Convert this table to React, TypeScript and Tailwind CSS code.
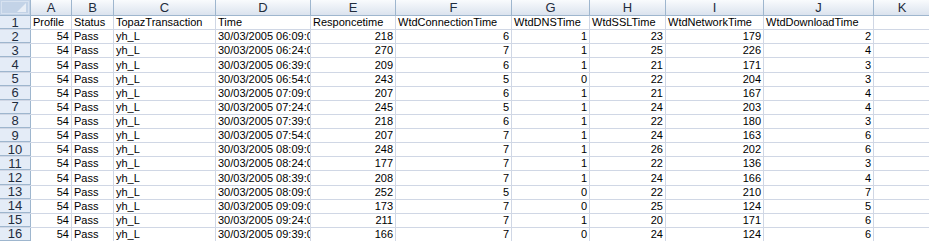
import React from "react";

const cols = [
  { key: "A", w: "w-[41px]" },
  { key: "B", w: "w-[42px]" },
  { key: "C", w: "w-[102px]" },
  { key: "D", w: "w-[95px]" },
  { key: "E", w: "w-[85px]" },
  { key: "F", w: "w-[116px]" },
  { key: "G", w: "w-[78px]" },
  { key: "H", w: "w-[76px]" },
  { key: "I", w: "w-[98px]" },
  { key: "J", w: "w-[110px]" },
];

const headers = [
  "Profile",
  "Status",
  "TopazTransaction",
  "Time",
  "Responcetime",
  "WtdConnectionTime",
  "WtdDNSTime",
  "WtdSSLTime",
  "WtdNetworkTime",
  "WtdDownloadTime",
];

const data: [string, number, number, number, number, number, number][] = [
  ["06:09:0", 218, 6, 1, 23, 179, 2],
  ["06:24:0", 270, 7, 1, 25, 226, 4],
  ["06:39:0", 209, 6, 1, 21, 171, 3],
  ["06:54:0", 243, 5, 0, 22, 204, 3],
  ["07:09:0", 207, 6, 1, 21, 167, 4],
  ["07:24:0", 245, 5, 1, 24, 203, 4],
  ["07:39:0", 218, 6, 1, 22, 180, 3],
  ["07:54:0", 207, 7, 1, 24, 163, 6],
  ["08:09:0", 248, 7, 1, 26, 202, 6],
  ["08:24:0", 177, 7, 1, 22, 136, 3],
  ["08:39:0", 208, 7, 1, 24, 166, 4],
  ["08:09:0", 252, 5, 0, 22, 210, 7],
  ["09:09:0", 173, 7, 0, 25, 124, 5],
  ["09:24:0", 211, 7, 1, 20, 171, 6],
  ["09:39:0", 166, 7, 0, 24, 124, 6],
];

const font = { fontFamily: '"Liberation Sans", Arial, sans-serif' };

function Cell({
  w,
  children,
  right,
}: {
  w: string;
  children?: React.ReactNode;
  right?: boolean;
}) {
  return (
    <div
      className={`${w} shrink-0 h-full border-r border-[#d0d7e5] overflow-hidden whitespace-nowrap flex items-end pb-[1px] text-[11px] leading-[12px] text-black ${
        right ? "justify-end pr-[2px]" : "justify-start pl-[2px]"
      }`}
    >
      {children}
    </div>
  );
}

function RowHeader({ n }: { n: number }) {
  return (
    <div className="w-[31px] shrink-0 h-full bg-[#e4ecf7] border-r border-[#9eb6ce] flex items-center justify-center text-[13px] leading-[13px] text-[#1f2c3d]">
      {n}
    </div>
  );
}

export default function App() {
  const rows: React.ReactNode[][] = [];
  rows.push(headers.map((h) => h));
  data.forEach((d) => {
    rows.push([
      "54",
      "Pass",
      "yh_L",
      `30/03/2005 ${d[0]}`,
      String(d[1]),
      String(d[2]),
      String(d[3]),
      String(d[4]),
      String(d[5]),
      String(d[6]),
    ]);
  });

  return (
    <div className="w-[929px] h-[241px] bg-white overflow-hidden" style={font}>
      {/* column header */}
      <div className="flex h-[16px] border-b border-[#9eb6ce] bg-gradient-to-b from-[#f9fbfd] to-[#dbe3ee]">
        <div className="w-[31px] shrink-0 h-full border-r border-[#9eb6ce] bg-[#c3d3e7] relative">
          <div className="absolute inset-[1px] border border-[#d7e2f0]" />
          <svg className="absolute right-[4px] bottom-[3px]" width="9" height="9" viewBox="0 0 9 9">
            <polygon points="9,0 9,9 0,9" fill="#e8eef6" />
          </svg>
        </div>
        {cols.map((c) => (
          <div
            key={c.key}
            className={`${c.w} shrink-0 h-full border-r border-[#9eb6ce] flex items-center justify-center text-[13px] leading-[13px] text-[#1f2c3d]`}
          >
            {c.key}
          </div>
        ))}
        <div className="w-[56px] shrink-0 h-full flex items-center justify-center text-[13px] leading-[13px] text-[#1f2c3d]">
          K
        </div>
      </div>
      {rows.map((r, i) => (
        <div key={i} className="flex h-[14.125px]">
          <div className="flex w-full h-full border-b border-[#d0d7e5]">
            <div className="flex h-full shrink-0 -mb-px border-b border-[#9eb6ce]">
              <RowHeader n={i + 1} />
            </div>
            {cols.map((c, j) => (
              <Cell key={c.key} w={c.w} right={i > 0 && (j === 0 || j >= 4)}>
                {r[j]}
              </Cell>
            ))}
            <Cell w="w-[56px]" />
          </div>
        </div>
      ))}
    </div>
  );
}
